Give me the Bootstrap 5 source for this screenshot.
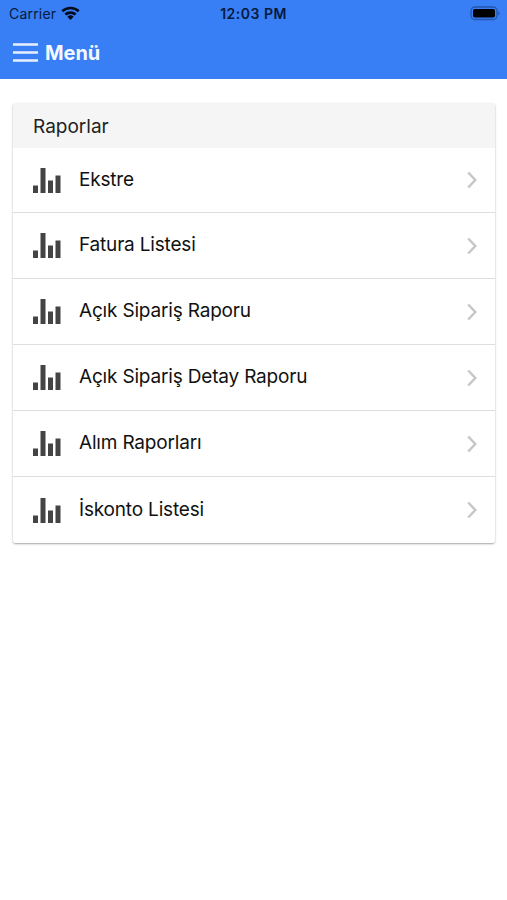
<!DOCTYPE html>
<html lang="tr">
<head>
<meta charset="utf-8">
<meta name="viewport" content="width=device-width, initial-scale=1">
<title>Menü</title>
<link href="https://cdn.jsdelivr.net/npm/bootstrap@5.3.0/dist/css/bootstrap.min.css" rel="stylesheet">
<style>
body { font-family: Inter, "Liberation Sans", sans-serif; background: #fff; color: #111; }
.app-header { background: #387ef5; height: 79px; border-bottom: 1px solid #3d7ff0; }
.status-bar { height: 27px; color: #071a3d; font-size: 14px; line-height: 27px; padding: 0 7px 0 9px; }
.status-bar > * { flex: 1 1 0; }
.carrier { letter-spacing: .2px; }
.clock { font-weight: 600; font-size: 14px; letter-spacing: .5px; margin-left: -2px; }
.title-bar { height: 51px; padding-left: 13px; gap: 7px; }
.title-text { font-size: 20px; font-weight: 700; color: #f4f8ff; line-height: 24px; letter-spacing: -.05px; }
.report-card { margin: 24px 12px 0 13px; border-radius: 3px; box-shadow: 0 1px 2px rgba(0,0,0,.36); }
.report-head { height: 45px; background: #f5f5f5; color: #222; padding: 1px 0 0 20px; font-size: 19px; line-height: 45px; border-radius: 3px 3px 0 0; }
.report-row { height: 66px; padding: 0 18px 0 19.5px; border-color: #dedede; color: #111; font-size: 19px; background: #fff; }
.report-row:first-child { height: 65px; }
.report-row:last-child { border-radius: 0 0 3px 3px; }
.report-label { margin-left: 18.5px; line-height: 24px; padding-bottom: 1px; letter-spacing: -.18px; }
</style>
<script src="https://cdn.jsdelivr.net/npm/bootstrap@5.3.0/dist/js/bootstrap.bundle.min.js"></script>
</head>
<body class="min-vh-100 d-flex flex-column">
<svg class="d-none" aria-hidden="true">
  <symbol id="bars" viewBox="0 0 28 25"><path fill="#444" d="M0 17.500h5V25H0zM7.500 0h5v25h-5zM15 12.500h5V25h-5zM22.500 7.500h5V25h-5z"/></symbol>
  <symbol id="chevron" viewBox="0 0 10 18"><path d="M1.200 1.500 8.300 9l-7.100 7.500" fill="none" stroke="#c7c7c7" stroke-width="2.500"/></symbol>
</svg>
<header class="app-header">
  <div class="status-bar d-flex align-items-center">
    <div class="carrier d-flex align-items-center">Carrier
      <svg class="ms-1" width="20" height="15" viewBox="0 0 20 15"><g fill="none" stroke="#020b1c" stroke-width="2.700"><path d="M2.300 5.300a11.800 11.800 0 0 1 16.400 0"/><path d="M5.400 8.600a7.400 7.400 0 0 1 10.200 0"/></g><path d="M7.400 10.700a4.600 4.600 0 0 1 6.200 0l-3.100 3.200z" fill="#020b1c"/></svg>
    </div>
    <div class="clock text-center">12:03 PM</div>
    <div class="d-flex justify-content-end align-items-center">
      <svg width="30" height="15" viewBox="0 0 30 15"><rect x="1" y="1" width="26" height="12.500" rx="3.800" fill="none" stroke="#2456ac" stroke-width="1.300"/><rect x="3" y="3" width="22" height="8.500" rx="1.800" fill="#000"/><path d="M28.300 5v4.500q1.400-.8 1.400-2.250T28.300 5z" fill="#2456ac"/></svg>
    </div>
  </div>
  <div class="title-bar d-flex align-items-center">
    <svg width="25" height="19" viewBox="0 0 25 19"><path d="M0 1.500h25M0 9.500h25M0 17.500h25" stroke="#e6f0ff" stroke-width="2.500"/></svg>
    <span class="title-text">Menü</span>
  </div>
</header>
<main class="report-card">
  <div class="report-head">Raporlar</div>
  <div class="list-group list-group-flush">
    <a href="#" class="report-row list-group-item d-flex align-items-center"><svg width="28" height="25"><use href="#bars"/></svg><span class="report-label flex-grow-1">Ekstre</span><svg width="10" height="18"><use href="#chevron"/></svg></a>
    <a href="#" class="report-row list-group-item d-flex align-items-center"><svg width="28" height="25"><use href="#bars"/></svg><span class="report-label flex-grow-1">Fatura Listesi</span><svg width="10" height="18"><use href="#chevron"/></svg></a>
    <a href="#" class="report-row list-group-item d-flex align-items-center"><svg width="28" height="25"><use href="#bars"/></svg><span class="report-label flex-grow-1">Açık Sipariş Raporu</span><svg width="10" height="18"><use href="#chevron"/></svg></a>
    <a href="#" class="report-row list-group-item d-flex align-items-center"><svg width="28" height="25"><use href="#bars"/></svg><span class="report-label flex-grow-1">Açık Sipariş Detay Raporu</span><svg width="10" height="18"><use href="#chevron"/></svg></a>
    <a href="#" class="report-row list-group-item d-flex align-items-center"><svg width="28" height="25"><use href="#bars"/></svg><span class="report-label flex-grow-1">Alım Raporları</span><svg width="10" height="18"><use href="#chevron"/></svg></a>
    <a href="#" class="report-row list-group-item d-flex align-items-center"><svg width="28" height="25"><use href="#bars"/></svg><span class="report-label flex-grow-1">İskonto Listesi</span><svg width="10" height="18"><use href="#chevron"/></svg></a>
  </div>
</main>
</body>
</html>
